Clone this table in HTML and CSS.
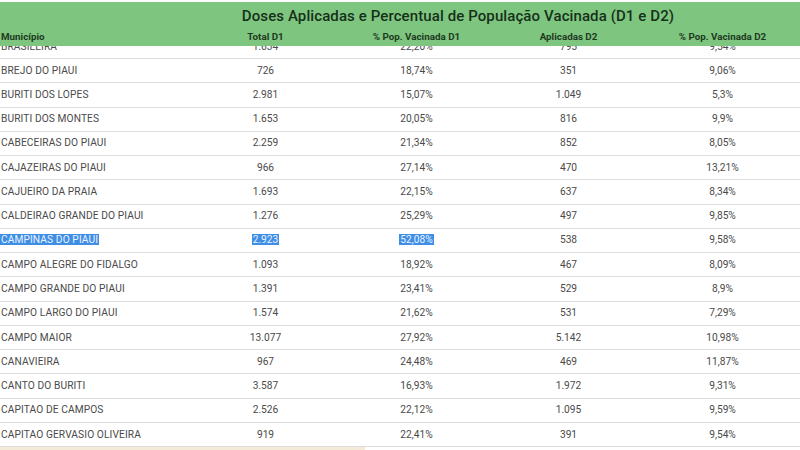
FILE: index.html
```html
<!DOCTYPE html>
<html lang="pt-BR">
<head>
<meta charset="utf-8">
<title>Doses Aplicadas</title>
<link rel="stylesheet" href="styles.css">
</head>
<body>
<div class="page">
  <header class="head">
    <h1 class="title">Doses Aplicadas e Percentual de População Vacinada (D1 e D2)</h1>
    <div class="cols">
      <div class="c name">Município</div>
      <div class="c">Total D1</div>
      <div class="c">% Pop. Vacinada D1</div>
      <div class="c">Aplicadas D2</div>
      <div class="c">% Pop. Vacinada D2</div>
    </div>
  </header>
  <div class="rows">
    <div class="row partial"><div class="name">BRASILEIRA</div><div>1.634</div><div>22,20%</div><div>795</div><div>9,54%</div></div>
    <div class="row"><div class="name">BREJO DO PIAUI</div><div>726</div><div>18,74%</div><div>351</div><div>9,06%</div></div>
    <div class="row"><div class="name">BURITI DOS LOPES</div><div>2.981</div><div>15,07%</div><div>1.049</div><div>5,3%</div></div>
    <div class="row"><div class="name">BURITI DOS MONTES</div><div>1.653</div><div>20,05%</div><div>816</div><div>9,9%</div></div>
    <div class="row"><div class="name">CABECEIRAS DO PIAUI</div><div>2.259</div><div>21,34%</div><div>852</div><div>8,05%</div></div>
    <div class="row"><div class="name">CAJAZEIRAS DO PIAUI</div><div>966</div><div>27,14%</div><div>470</div><div>13,21%</div></div>
    <div class="row"><div class="name">CAJUEIRO DA PRAIA</div><div>1.693</div><div>22,15%</div><div>637</div><div>8,34%</div></div>
    <div class="row"><div class="name">CALDEIRAO GRANDE DO PIAUI</div><div>1.276</div><div>25,29%</div><div>497</div><div>9,85%</div></div>
    <div class="row"><div class="name"><span class="sel">CAMPINAS DO PIAUI</span></div><div><span class="sel">2.923</span></div><div><span class="sel">52,08%</span></div><div>538</div><div>9,58%</div></div>
    <div class="row"><div class="name">CAMPO ALEGRE DO FIDALGO</div><div>1.093</div><div>18,92%</div><div>467</div><div>8,09%</div></div>
    <div class="row"><div class="name">CAMPO GRANDE DO PIAUI</div><div>1.391</div><div>23,41%</div><div>529</div><div>8,9%</div></div>
    <div class="row"><div class="name">CAMPO LARGO DO PIAUI</div><div>1.574</div><div>21,62%</div><div>531</div><div>7,29%</div></div>
    <div class="row"><div class="name">CAMPO MAIOR</div><div>13.077</div><div>27,92%</div><div>5.142</div><div>10,98%</div></div>
    <div class="row"><div class="name">CANAVIEIRA</div><div>967</div><div>24,48%</div><div>469</div><div>11,87%</div></div>
    <div class="row"><div class="name">CANTO DO BURITI</div><div>3.587</div><div>16,93%</div><div>1.972</div><div>9,31%</div></div>
    <div class="row"><div class="name">CAPITAO DE CAMPOS</div><div>2.526</div><div>22,12%</div><div>1.095</div><div>9,59%</div></div>
    <div class="row"><div class="name">CAPITAO GERVASIO OLIVEIRA</div><div>919</div><div>22,41%</div><div>391</div><div>9,54%</div></div>
  </div>
  <div class="foot"></div>
</div>
</body>
</html>
```

FILE: styles.css
```css
html, body {
  margin: 0;
  padding: 0;
  background: #ffffff;
  overflow: hidden;
}
body {
  font-family: Roboto, "Liberation Sans", Arial, sans-serif;
  width: 800px;
  height: 450px;
}
.page {
  width: 800px;
  height: 450px;
  padding-top: 2px;
  box-sizing: border-box;
  background: #fff;
}
.head {
  background: #7ec680;
  height: 44px;
  box-sizing: border-box;
  padding-top: 4px;
  padding-bottom: 3px;
  display: flex;
  flex-direction: column;
  gap: 5px;
}
.title {
  margin: 0;
  padding-left: 116px;
  text-align: center;
  font-size: 15px;
  font-weight: 500;
  line-height: 20px;
  color: #17301a;
  letter-spacing: 0.1px;
}
.cols, .row {
  display: grid;
  grid-template-columns: 190px 151px 151px 153px 155px;
}
.cols {
  height: 12px;
  line-height: 12px;
  font-size: 9.8px;
  font-weight: 700;
  color: #1f3a21;
}
.c { text-align: center; white-space: nowrap; }
.cols .name { text-align: left; padding-left: 1px; }
.rows { display: flex; flex-direction: column; }
.row {
  height: 24.27px;
  box-sizing: border-box;
  border-bottom: 1px solid #dddddd;
  align-items: center;
  font-size: 10.2px;
  color: #4a4a4a;
  line-height: 14px;
}
.row > div { text-align: center; white-space: nowrap; }
.row > .name { text-align: left; padding-left: 1px; letter-spacing: 0.1px; }
.row.partial {
  height: 13px;
  overflow: hidden;
  align-items: start;
}
.row.partial > div {
  height: 23px;
  line-height: 23px;
  margin-top: -11px;
}
.sel {
  background: #3f8ee6;
  color: #eaf2ff;
  padding: 0 1px;
}
.row > .name .sel { margin-left: -1px; }
.foot {
  width: 365px;
  height: 3px;
  background: #f3ead8;
}
```
